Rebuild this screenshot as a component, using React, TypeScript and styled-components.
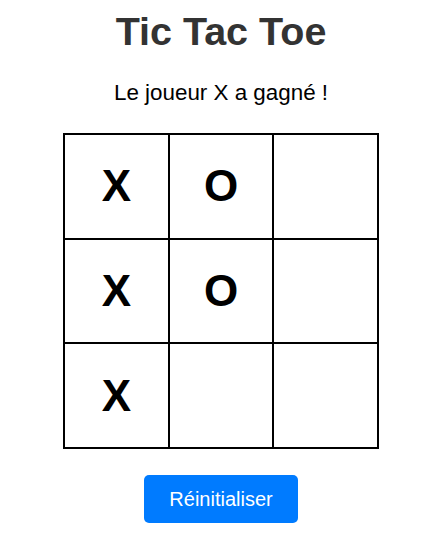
import React, { useState } from "react";
import styled, { createGlobalStyle } from "styled-components";

const GlobalStyle = createGlobalStyle`
  html, body {
    margin: 0;
    padding: 0;
    background: #ffffff;
    font-family: "Liberation Sans", Arial, sans-serif;
  }
`;

const Page = styled.div`
  display: flex;
  flex-direction: column;
  align-items: center;
  padding: 8px 0 0 14px;
`;

const Title = styled.h1`
  margin: 0;
  font-size: 39.5px;
  line-height: 46px;
  font-weight: 700;
  color: #333333;
`;

const Status = styled.p`
  margin: 26px 0 0;
  font-size: 22.4px;
  line-height: 26px;
  color: #000000;
`;

const Board = styled.div`
  margin-top: 27px;
  width: 316px;
  height: 316px;
  box-sizing: border-box;
  display: grid;
  grid-template-columns: repeat(3, 1fr);
  grid-template-rows: repeat(3, 1fr);
  border-top: 2px solid #000;
  border-left: 2px solid #000;
`;

const Cell = styled.button`
  all: unset;
  box-sizing: border-box;
  display: flex;
  align-items: center;
  justify-content: center;
  border-right: 2px solid #000;
  border-bottom: 2px solid #000;
  background: #fff;
  font-family: "Liberation Sans", Arial, sans-serif;
  font-size: 44px;
  font-weight: 700;
  color: #000;
  cursor: pointer;
`;

const ResetButton = styled.button`
  margin-top: 26px;
  border: none;
  border-radius: 5px;
  background: #007bff;
  color: #ffffff;
  font-family: "Liberation Sans", Arial, sans-serif;
  font-size: 20px;
  line-height: 24px;
  padding: 12px 25px;
  cursor: pointer;
`;

const initial = ["X", "O", "", "X", "O", "", "X", "", ""];

export default function App() {
  const [cells, setCells] = useState<string[]>(initial);
  return (
    <>
      <GlobalStyle />
      <Page>
        <Title>Tic Tac Toe</Title>
        <Status>Le joueur X a gagné !</Status>
        <Board>
          {cells.map((v, i) => (
            <Cell key={i}>{v}</Cell>
          ))}
        </Board>
        <ResetButton onClick={() => setCells(Array(9).fill(""))}>
          Réinitialiser
        </ResetButton>
      </Page>
    </>
  );
}
